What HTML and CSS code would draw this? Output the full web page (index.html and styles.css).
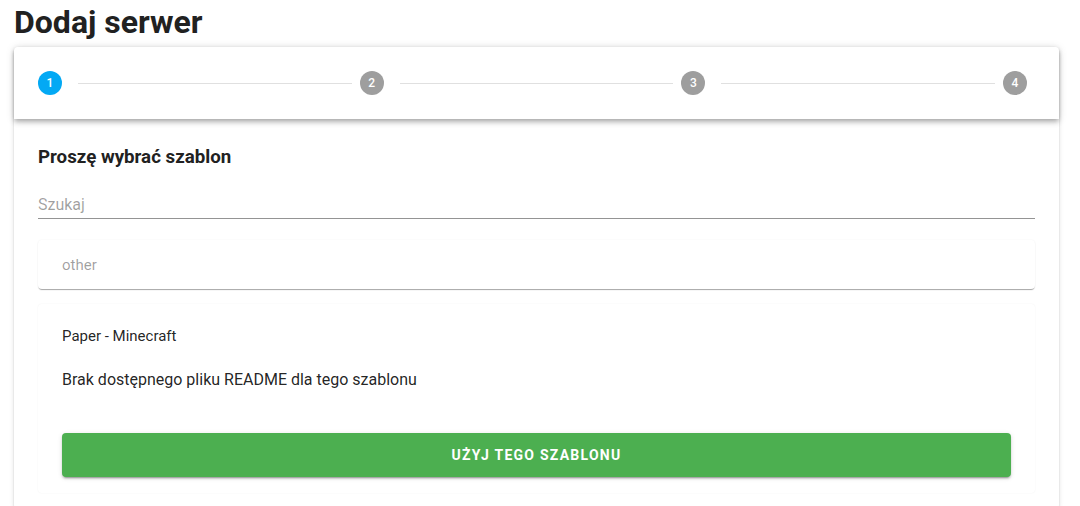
FILE: index.html
```html
<!DOCTYPE html>
<html lang="pl">
<head>
    <meta charset="UTF-8">
    <title>Dodaj serwer</title>
    <link rel="stylesheet" href="styles.css">
</head>
<body>
    <h1 class="page-title">Dodaj serwer</h1>

    <!-- Stepper -->
    <div class="stepper">
        <div class="stepper-header">
            <div class="step"><span class="step-num active">1</span></div>
            <div class="step-line"></div>
            <div class="step"><span class="step-num">2</span></div>
            <div class="step-line"></div>
            <div class="step"><span class="step-num">3</span></div>
            <div class="step-line"></div>
            <div class="step last"><span class="step-num">4</span></div>
        </div>

        <div class="stepper-content">
            <h3 class="section-title">Proszę wybrać szablon</h3>

            <div class="search">
                <input type="text" placeholder="Szukaj">
            </div>

            <div class="panels">
                <div class="panel">
                    <div class="panel-header muted">other</div>
                </div>
                <div class="panel open">
                    <div class="panel-header">Paper - Minecraft</div>
                    <div class="panel-body">
                        <p>Brak dostępnego pliku README dla tego szablonu</p>
                        <button type="button" class="btn-use">Użyj tego szablonu</button>
                    </div>
                </div>
            </div>
        </div>
    </div>
</body>
</html>
```

FILE: styles.css
```css
body {
    margin: 0;
    padding: 0 21px 0 14px;
    background: #ffffff;
    color: rgba(0, 0, 0, 0.87);
    font-family: Roboto, 'Liberation Sans', sans-serif;
    overflow: hidden;
}

/* Titre */
.page-title {
    margin: 0;
    padding-top: 2px;
    font-size: 32px;
    font-weight: 700;
    line-height: 40px;
    color: #212121;
}

/* Stepper */
.stepper {
    margin-top: 5px;
    border-radius: 4px;
    background: #ffffff;
    box-shadow: 0 3px 1px -2px rgba(0, 0, 0, 0.2), 0 2px 2px 0 rgba(0, 0, 0, 0.14), 0 1px 5px 0 rgba(0, 0, 0, 0.12);
}

.stepper-header {
    display: flex;
    align-items: center;
    height: 72px;
    box-shadow: 0 2px 4px -1px rgba(0, 0, 0, 0.2), 0 4px 5px 0 rgba(0, 0, 0, 0.14), 0 1px 10px 0 rgba(0, 0, 0, 0.12);
    position: relative;
    z-index: 1;
    border-radius: 4px 4px 0 0;
}

.step {
    display: flex;
    align-items: center;
    padding: 24px;
}

.step-num {
    width: 24px;
    height: 24px;
    margin-right: 8px;
    border-radius: 50%;
    background: #9e9e9e;
    color: #ffffff;
    font-size: 12px;
    font-weight: 500;
    display: flex;
    align-items: center;
    justify-content: center;
}

.step-num.active {
    background: #03a9f4;
}

.step-line {
    flex: 1;
    height: 1px;
    background: rgba(0, 0, 0, 0.12);
    margin: 0 -16px;
}

/* Contenu */
.stepper-content {
    padding: 24px 24px 16px;
}

.section-title {
    margin: 0;
    font-size: 1.17em;
    font-weight: 700;
    line-height: 28px;
    color: #212121;
}

.search {
    margin-top: 16px;
}

.search input {
    width: 100%;
    box-sizing: border-box;
    height: 32px;
    padding: 3px 0 0;
    border: none;
    border-bottom: 1px solid rgba(0, 0, 0, 0.42);
    font-family: inherit;
    font-size: 16px;
    outline: none;
    background: transparent;
}

.search input::placeholder {
    color: rgba(0, 0, 0, 0.38);
}

/* Panneaux */
.panels {
    margin-top: 21px;
    display: flex;
    flex-direction: column;
    gap: 15px;
}

.panel {
    border-radius: 4px;
    background: #ffffff;
    box-shadow: 0 1px 1px -1px rgba(0, 0, 0, 0.1), 0 1px 2px 0 rgba(0, 0, 0, 0.12), 0 0 1px 0 rgba(0, 0, 0, 0.06);
}

.panel:first-child {
    box-shadow: 0 2px 1px -1px rgba(0, 0, 0, 0.25), 0 1px 1px 0 rgba(0, 0, 0, 0.12), 0 0 2px 0 rgba(0, 0, 0, 0.05);
}

.panel.open {
    box-shadow: 0 0 2px 0 rgba(0, 0, 0, 0.06);
}

.panel-header {
    display: flex;
    align-items: center;
    min-height: 49px;
    padding: 0 24px;
    font-size: 15px;
    color: rgba(0, 0, 0, 0.87);
}

.panel-header.muted {
    color: rgba(0, 0, 0, 0.38);
}

.panel.open .panel-header {
    min-height: 64px;
}

.panel-body {
    padding: 0 24px 16px;
}

.panel-body p {
    margin: 0 0 41px;
    font-size: 16px;
    line-height: 24px;
    color: rgba(0, 0, 0, 0.87);
}

.btn-use {
    width: 100%;
    height: 44px;
    border: none;
    border-radius: 4px;
    background: #4caf50;
    color: #ffffff;
    font-family: inherit;
    font-size: 14px;
    font-weight: 700;
    letter-spacing: 1.25px;
    text-transform: uppercase;
    box-shadow: 0 3px 1px -2px rgba(0, 0, 0, 0.2), 0 2px 2px 0 rgba(0, 0, 0, 0.14), 0 1px 5px 0 rgba(0, 0, 0, 0.12);
    cursor: pointer;
}
```
